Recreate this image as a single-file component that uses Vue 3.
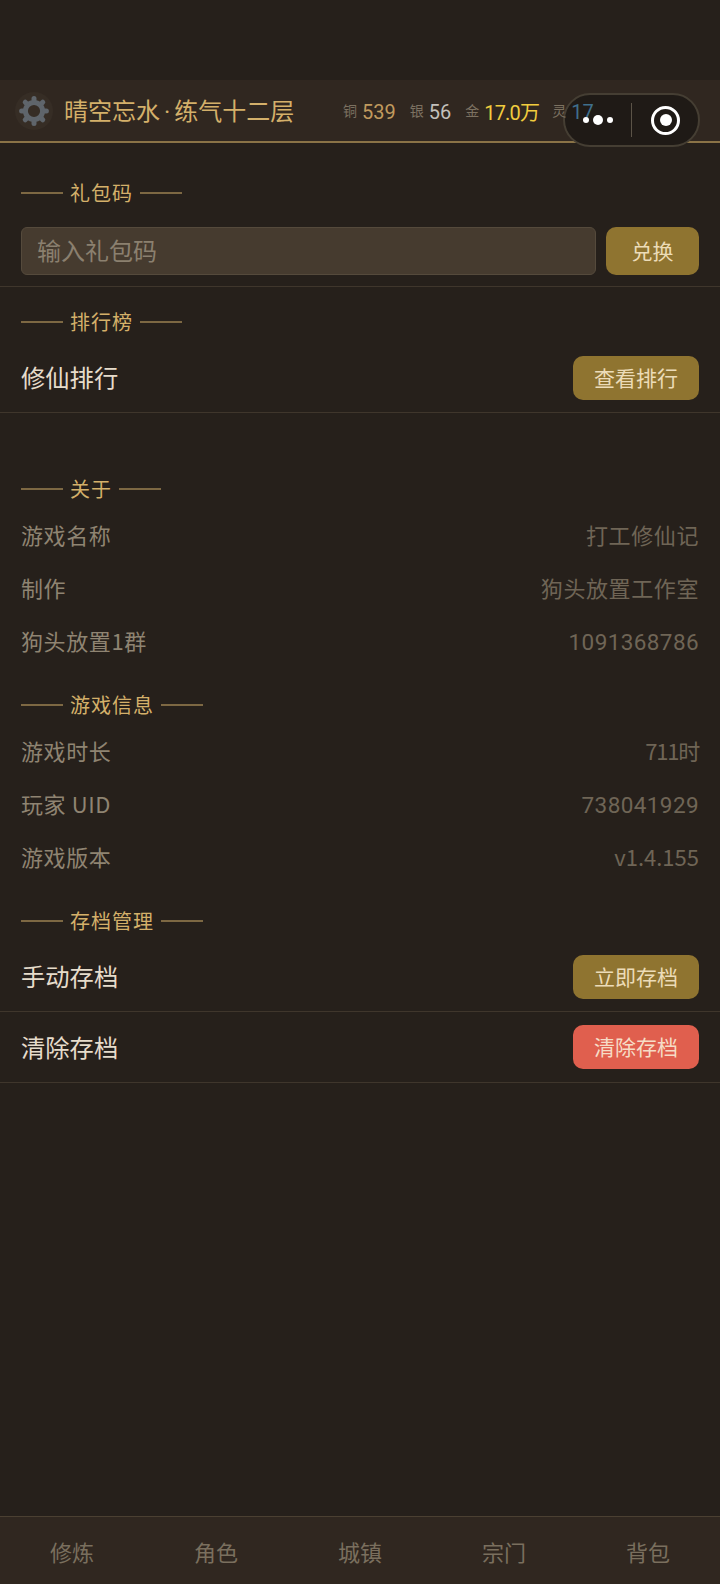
<template>
  <div class="page">
    <div class="status-space"></div>

    <div class="top-bar">
      <div class="avatar">
        <svg viewBox="0 0 30 30" width="30" height="30">
          <circle cx="15" cy="15" r="8.6" fill="none" stroke="#5f656b" stroke-width="5" />
          <line
            v-for="deg in gearTeeth"
            :key="deg"
            x1="15"
            y1="4"
            x2="15"
            y2="2.6"
            stroke="#5f656b"
            stroke-width="5"
            stroke-linecap="round"
            :transform="`rotate(${deg} 15 15)`"
          />
        </svg>
      </div>
      <span class="player-name">晴空忘水<span class="name-dot">·</span>练气十二层</span>
      <div class="currency-list">
        <span v-for="item in currencies" :key="item.label" class="currency">
          <span class="currency-label">{{ item.label }}</span>
          <span class="currency-value" :class="item.type">{{ item.value }}</span>
        </span>
      </div>
      <div class="capsule">
        <div class="capsule-dots"><i></i><i class="big"></i><i></i></div>
        <div class="capsule-line"></div>
        <div class="capsule-target"><i></i></div>
      </div>
    </div>

    <div class="main">
      <div class="section-title first">礼包码</div>
      <div class="gift-row">
        <input class="gift-input" type="text" placeholder="输入礼包码" />
        <button class="btn exchange-btn">兑换</button>
      </div>

      <div class="section-title rank-title">排行榜</div>
      <div class="action-row tall-row">
        <span class="action-name">修仙排行</span>
        <button class="btn">查看排行</button>
      </div>

      <div class="section-title about-title">关于</div>
      <div v-for="item in aboutList" :key="item.label" class="info-row">
        <span>{{ item.label }}</span>
        <span class="info-value" :class="item.kind">{{ item.value }}</span>
      </div>

      <div class="section-title info-title">游戏信息</div>
      <div v-for="item in gameInfo" :key="item.label" class="info-row">
        <span>{{ item.label }}</span>
        <span class="info-value" :class="item.kind">{{ item.value }}</span>
      </div>

      <div class="section-title save-title">存档管理</div>
      <div class="action-row tall-row">
        <span class="action-name">手动存档</span>
        <button class="btn">立即存档</button>
      </div>
      <div class="action-row">
        <span class="action-name">清除存档</span>
        <button class="btn danger">清除存档</button>
      </div>
    </div>

    <div class="tab-bar">
      <span v-for="tab in tabs" :key="tab" class="tab">{{ tab }}</span>
    </div>
  </div>
</template>

<script setup>
const gearTeeth = [0, 45, 90, 135, 180, 225, 270, 315];

const currencies = [
  { label: '铜', value: '539', type: 'copper' },
  { label: '银', value: '56', type: 'silver' },
  { label: '金', value: '17.0万', type: 'gold' },
  { label: '灵', value: '17', type: 'spirit' }
];

const aboutList = [
  { label: '游戏名称', value: '打工修仙记' },
  { label: '制作', value: '狗头放置工作室' },
  { label: '狗头放置1群', value: '1091368786', kind: 'num' }
];

const gameInfo = [
  { label: '游戏时长', value: '711时', kind: 'tight' },
  { label: '玩家 UID', value: '738041929', kind: 'num' },
  { label: '游戏版本', value: 'v1.4.155', kind: 'version' }
];

const tabs = ['修炼', '角色', '城镇', '宗门', '背包'];
</script>

<style>
body {
  background: #26201b;
}
</style>

<style scoped>
.page {
  width: 720px;
  height: 1584px;
  display: flex;
  flex-direction: column;
  background: #26201b;
  font-family: "Noto Sans CJK SC", "Noto Sans", sans-serif;
  overflow: hidden;
}

.status-space {
  height: 80px;
}

.top-bar {
  position: relative;
  height: 63px;
  box-sizing: border-box;
  display: flex;
  align-items: center;
  padding: 0 0 0 15px;
  background: #302720;
  border-bottom: 2px solid #8a7347;
}

.avatar {
  width: 38px;
  height: 38px;
  border-radius: 50%;
  background: #362d25;
  display: flex;
  align-items: center;
  justify-content: center;
  flex-shrink: 0;
}

.player-name {
  margin-left: 11px;
  padding-bottom: 2px;
  font-size: 24px;
  color: #d4b06a;
  white-space: nowrap;
}

.name-dot {
  margin: 0 4px;
  font-family: Roboto, sans-serif;
}

.currency-list {
  position: absolute;
  left: 343px;
  top: 17px;
  z-index: 1;
  display: flex;
  align-items: center;
  gap: 14px;
  white-space: nowrap;
}

.currency {
  display: flex;
  align-items: center;
  gap: 5px;
}

.currency-label {
  padding-bottom: 3px;
  font-size: 14px;
  color: #7c7161;
}

.currency-value {
  font-size: 20px;
  font-family: Roboto, "Noto Sans CJK SC", sans-serif;
}

.copper {
  color: #c09a5e;
}

.silver {
  color: #c3c0bb;
}

.gold {
  color: #f1cc3e;
  letter-spacing: -0.8px;
  margin-right: -1px;
}

.spirit {
  color: #3f6f8c;
}

.capsule {
  position: absolute;
  left: 563px;
  top: 13px;
  width: 137px;
  height: 54px;
  box-sizing: border-box;
  display: flex;
  align-items: center;
  background: #1f1a16;
  border: 2px solid #453e33;
  border-radius: 27px;
}

.capsule-dots {
  position: relative;
  z-index: 2;
  width: 65px;
  display: flex;
  align-items: center;
  justify-content: center;
  gap: 4px;
}

.capsule-dots i {
  width: 6px;
  height: 6px;
  border-radius: 50%;
  background: #fff;
}

.capsule-dots i.big {
  width: 10px;
  height: 10px;
}

.capsule-line {
  width: 1px;
  height: 34px;
  margin-left: 1px;
  background: #5b5347;
}

.capsule-target {
  width: 29px;
  height: 29px;
  margin-left: 19px;
  box-sizing: border-box;
  border: 3px solid #fff;
  border-radius: 50%;
  display: flex;
  align-items: center;
  justify-content: center;
}

.capsule-target i {
  width: 12px;
  height: 12px;
  border-radius: 50%;
  background: #fff;
}

.main {
  flex: 1;
}

.section-title {
  display: flex;
  align-items: center;
  gap: 7px;
  height: 30px;
  box-sizing: border-box;
  padding: 0 0 2px 21px;
  font-size: 20px;
  letter-spacing: 1px;
  color: #d4b06a;
}

.section-title::before,
.section-title::after {
  content: "";
  width: 42px;
  height: 2px;
  background: #7d6843;
  transform: translateY(1px);
}

.section-title.first {
  margin-top: 35px;
}

.rank-title {
  margin-top: 20px;
}

.about-title {
  margin-top: 61px;
  margin-bottom: 3px;
}

.info-title {
  margin-top: 24px;
  margin-bottom: 3px;
}

.save-title {
  margin-top: 24px;
}

.gift-row {
  display: flex;
  gap: 10px;
  padding: 19px 21px 11px;
  border-bottom: 1px solid #3f362c;
}

.gift-input {
  flex: 1;
  min-width: 0;
  height: 48px;
  box-sizing: border-box;
  padding: 0 15px 4px;
  background: #463b2f;
  border: 1px solid #554a3c;
  border-radius: 6px;
  font-family: inherit;
  font-size: 24px;
  color: #cfc4b0;
  outline: none;
}

.gift-input::placeholder {
  color: #8b806f;
  opacity: 1;
}

.btn {
  height: 44px;
  padding: 0 21px 2px;
  background: #8f7430;
  border: none;
  border-radius: 10px;
  font-family: inherit;
  font-size: 21px;
  color: #ecdcb8;
}

.exchange-btn {
  width: 93px;
  height: 48px;
  padding: 0 0 3px;
}

.btn.danger {
  background: #e05f4e;
  color: #f6dcc6;
}

.action-row {
  height: 71px;
  box-sizing: border-box;
  display: flex;
  align-items: center;
  justify-content: space-between;
  padding: 0 21px;
  border-bottom: 1px solid #3f362c;
}

.tall-row {
  height: 76px;
  padding-top: 6px;
}

.action-name {
  margin-top: -2px;
  font-size: 24.3px;
  color: #e6dccb;
}

.info-row {
  height: 53px;
  display: flex;
  align-items: center;
  justify-content: space-between;
  padding: 0 21px;
  font-size: 22px;
  letter-spacing: 0.6px;
  color: #8f8472;
}

.info-value {
  color: #6f6556;
}

.info-value.num {
  padding-top: 5px;
  font-family: Roboto, sans-serif;
  font-size: 22.5px;
  letter-spacing: 0.4px;
}

.info-value.tight {
  letter-spacing: -1.2px;
}

.info-value.version {
  letter-spacing: 0;
}

.tab-bar {
  height: 68px;
  box-sizing: border-box;
  display: flex;
  background: #302720;
  border-top: 1px solid #4b4032;
}

.tab {
  flex: 1;
  display: flex;
  align-items: center;
  justify-content: center;
  font-size: 22px;
  color: #7a6f5e;
}
</style>
